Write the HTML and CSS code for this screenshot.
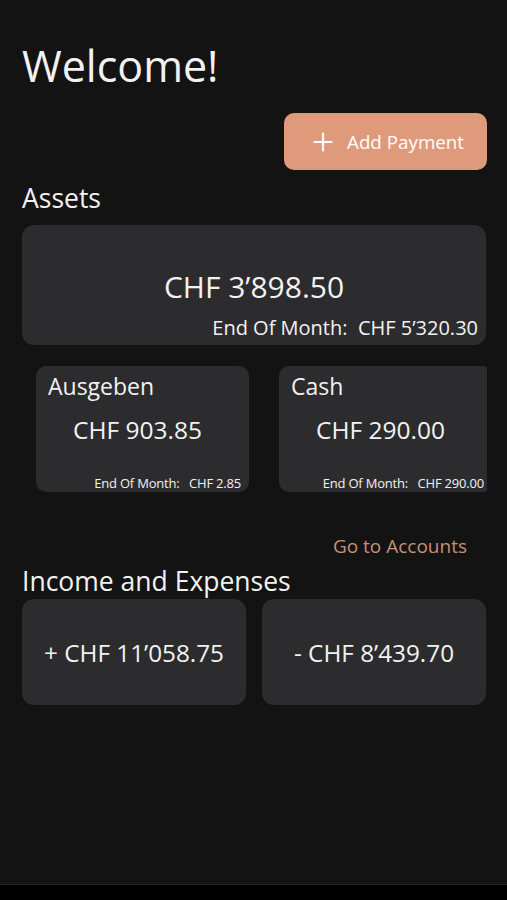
FILE: index.html
```html
<!DOCTYPE html>
<html lang="en">
<head>
  <meta charset="UTF-8">
  <title>Finance - Home</title>
  <link rel="stylesheet" href="styles.css">
</head>
<body>

  <div id="screen">

    <h1 class="welcome">Welcome!</h1>

    <div class="actions">
      <button class="addButton">
        <svg width="20" height="20" viewBox="0 0 20 20">
          <path d="M10 1.5v17M1.5 10h17" stroke="#fff" stroke-width="2.2" stroke-linecap="round"/>
        </svg>
        Add Payment
      </button>
    </div>

    <h2 class="sectionTitle">Assets</h2>

    <div class="totalCard">
      <div class="totalAmount">CHF 3&rsquo;898.50</div>
      <div class="endOfMonth">End Of Month:&nbsp; CHF 5&rsquo;320.30</div>
    </div>

    <div class="accounts">
      <div class="accountCard">
        <div class="accountName">Ausgeben</div>
        <div class="accountAmount">CHF 903.85</div>
        <div class="accountEnd">End Of Month:&nbsp;&nbsp; CHF 2.85</div>
      </div>
      <div class="accountCard">
        <div class="accountName">Cash</div>
        <div class="accountAmount">CHF 290.00</div>
        <div class="accountEnd">End Of Month:&nbsp;&nbsp; CHF 290.00</div>
      </div>
    </div>

    <div class="linkRow">
      <a href="#" class="accountsLink">Go to Accounts</a>
    </div>

    <h2 class="sectionTitle incomeTitle">Income and Expenses</h2>

    <div class="flows">
      <div class="flowCard">+ CHF 11&rsquo;058.75</div>
      <div class="flowCard">- CHF 8&rsquo;439.70</div>
    </div>

  </div>

  <div id="navBar"></div>

</body>
</html>
```

FILE: styles.css
```css
body {
  background-color: #131313;
  color: #f2f2f2;
  font-family: "Open Sans", "Noto Sans", sans-serif;
  margin: 0;
  padding: 0;
}

#screen {
  height: 885px;
  padding: 0 21px 0 22px;
  box-sizing: border-box;
  overflow: hidden;
  border-bottom: 1px solid #262626;
}

.welcome {
  font-size: 43px;
  font-weight: 400;
  margin: 0;
  padding-top: 38px;
  line-height: 56px;
}

.actions {
  display: flex;
  justify-content: flex-end;
  margin-top: 19px;
}

.addButton {
  display: flex;
  align-items: center;
  gap: 14px;
  width: 203px;
  height: 57px;
  margin-right: -1px;
  padding: 0 0 0 29px;
  background-color: #df9a7b;
  color: #fff;
  border: none;
  border-radius: 10px;
  font-family: "Open Sans", sans-serif;
  font-size: 18.8px;
}

.sectionTitle {
  font-size: 26.5px;
  font-weight: 400;
  margin: 11px 0 0 0;
  line-height: 34px;
}

.totalCard {
  margin-top: 10px;
  height: 120px;
  background-color: #2c2c2e;
  border-radius: 12px;
  display: flex;
  flex-direction: column;
  align-items: center;
  box-sizing: border-box;
  padding: 43px 8px 0 0;
}

.totalAmount {
  font-size: 30px;
  line-height: 38px;
  margin-left: 8px;
}

.endOfMonth {
  align-self: flex-end;
  font-size: 20px;
  line-height: 26px;
  margin-top: 9px;
}

.accounts {
  display: flex;
  gap: 30px;
  margin-top: 21px;
  padding-left: 14px;
  overflow: hidden;
  margin-right: -1px;
}

.accountCard {
  flex: 0 0 213px;
  height: 126px;
  background-color: #2c2c2e;
  border-radius: 10px;
  box-sizing: border-box;
  padding: 4px 8px 0 12px;
  display: flex;
  flex-direction: column;
}

.accountName {
  font-size: 23px;
  line-height: 32px;
}

.accountAmount {
  font-size: 24.5px;
  line-height: 32px;
  text-align: center;
  margin-top: 12px;
  padding-right: 14px;
}

.accountEnd {
  margin-top: auto;
  margin-bottom: 0;
  align-self: flex-end;
  font-size: 13px;
  letter-spacing: -0.2px;
  line-height: 18px;
}

.linkRow {
  display: flex;
  justify-content: flex-end;
  margin-top: 41px;
  padding-right: 19px;
}

.accountsLink {
  color: #c98f74;
  text-decoration: none;
  font-size: 19px;
  line-height: 26px;
}

.incomeTitle {
  margin-top: 5px;
}

.flows {
  display: flex;
  gap: 16px;
  margin-top: 1px;
}

.flowCard {
  flex: 1;
  height: 106px;
  background-color: #2c2c2e;
  border-radius: 12px;
  display: flex;
  align-items: center;
  justify-content: center;
  font-size: 24.3px;
}

#navBar {
  height: 15px;
  background-color: #000;
}
```
